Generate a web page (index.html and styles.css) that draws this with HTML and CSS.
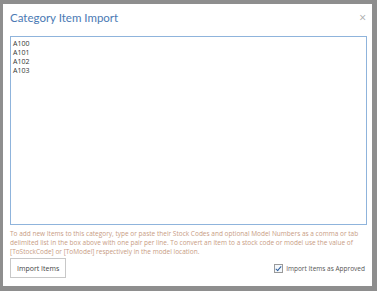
FILE: index.html
```html
<!DOCTYPE html>
<html lang="en">
<head>
    <meta charset="UTF-8">
    <title>Category Item Import</title>
    <link rel="stylesheet" href="styles.css">
</head>
<body>
    <div class="modal">
        <div class="modal-header">
            <h1 class="modal-title">Category Item Import</h1>
            <span class="close">&times;</span>
        </div>
        <textarea class="items" spellcheck="false">A100
A101
A102
A103</textarea>
        <p class="help">To add new Items to this category, type or paste their Stock Codes and optional Model Numbers as a comma or tab delimited list in the box above with one pair per line. To convert an item to a stock code or model use the value of [ToStockCode] or [ToModel] respectively in the model location.</p>
        <div class="footer">
            <button class="btn">Import Items</button>
            <label class="approve"><input type="checkbox" checked> Import Items as Approved</label>
        </div>
    </div>
</body>
</html>
```

FILE: styles.css
```css
html, body {
    margin: 0;
    height: 100%;
}

body {
    background-color: #8e8e8e;
    font-family: "Open Sans", sans-serif;
    padding: 4px 5px 5px 3px;
    box-sizing: border-box;
}

.modal {
    background-color: #fff;
    height: 100%;
    box-sizing: border-box;
    padding: 0 5px 0 7px;
    display: flex;
    flex-direction: column;
}

.modal-header {
    display: flex;
    justify-content: space-between;
    align-items: center;
    height: 26px;
    margin-bottom: 6px;
}

.modal-title {
    margin: 0;
    font-family: Lato, sans-serif;
    font-size: 11.5px;
    font-weight: normal;
    color: #4b7ab4;
}

.close {
    color: #aaa;
    font-size: 12px;
    margin-right: 1px;
}

.items {
    display: block;
    width: 100%;
    height: 189px;
    box-sizing: border-box;
    border: 1px solid #8fb4dc;
    padding: 2px 2px;
    font-family: "Open Sans", sans-serif;
    font-size: 7px;
    line-height: 9px;
    color: #333;
    resize: none;
    outline: none;
}

.help {
    margin: 4px 0 0;
    font-size: 6.5px;
    line-height: 9px;
    color: #c89c84;
}

.footer {
    display: flex;
    justify-content: space-between;
    align-items: center;
    margin-top: 2px;
}

.btn {
    background-color: #fff;
    border: 1px solid #c8c8c8;
    font-family: "Open Sans", sans-serif;
    font-size: 7px;
    color: #444;
    padding: 0 6px;
    height: 20px;
}

.approve {
    display: flex;
    align-items: center;
    gap: 3px;
    font-size: 6.5px;
    color: #555;
    margin-right: 2px;
}

.approve input {
    appearance: none;
    position: relative;
    margin: 0;
    width: 9px;
    height: 9px;
    border: 1px solid #9a9a9a;
    background-color: #f4f8fc;
}

.approve input:checked::after {
    content: "";
    position: absolute;
    left: 2px;
    top: 0;
    width: 2px;
    height: 5px;
    border: solid #2f5f9e;
    border-width: 0 1.5px 1.5px 0;
    transform: rotate(40deg);
}
```
